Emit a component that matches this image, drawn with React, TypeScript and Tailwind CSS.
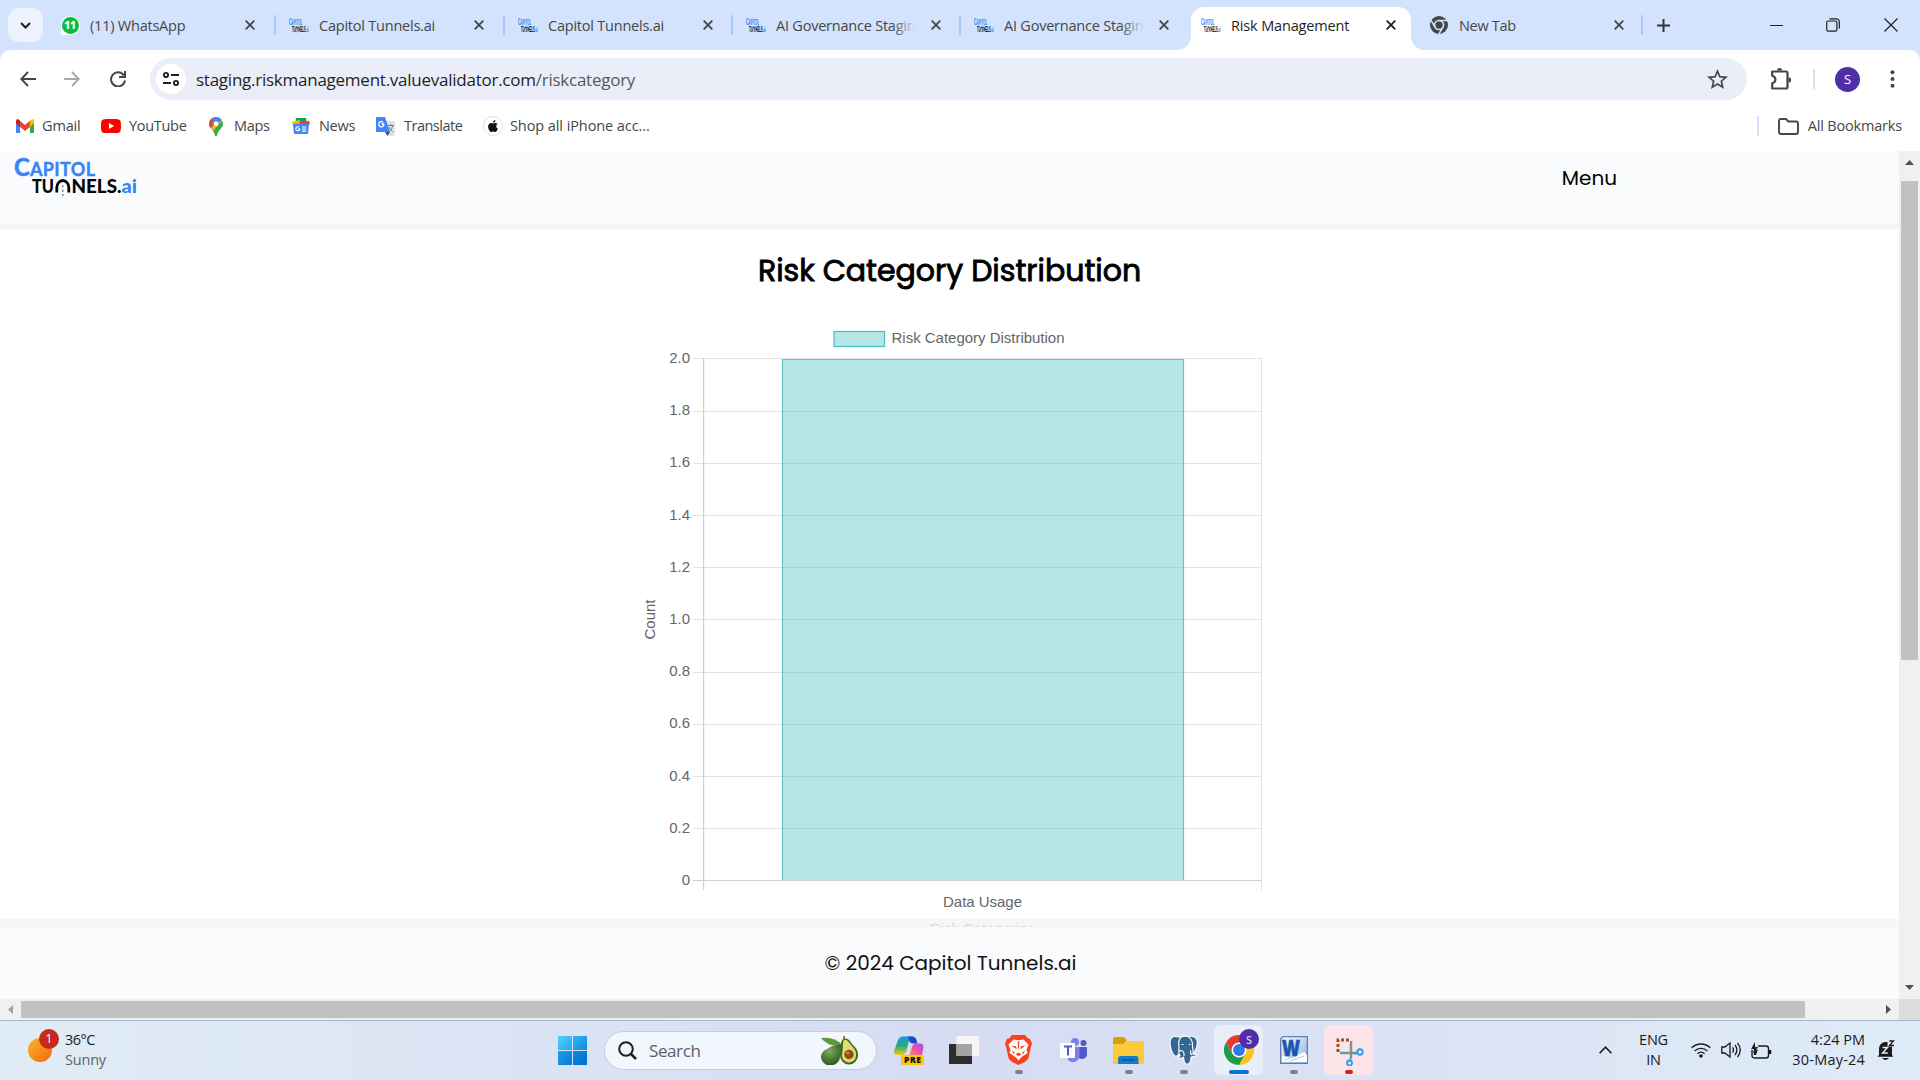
import React from "react";
import { SiYoutube, SiApple } from "react-icons/si";

function CapitolLogo({ className }: { className: string }) {
  return (
    <svg className={className} viewBox="0 0 124 40" preserveAspectRatio="none" fontFamily="Lato" fontWeight="900">
      <text x="0" y="18.500" fontSize="24" fill="#3485f7" fontWeight="700" stroke="#3485f7" strokeWidth="0.5">C</text>
      <text x="16" y="18.500" fontSize="18" fill="#3485f7" fontWeight="700" textLength="65" stroke="#3485f7" strokeWidth="0.4">APITOL</text>
      <text x="18" y="35.500" fontSize="18" fill="#050505" textLength="22" lengthAdjust="spacingAndGlyphs">TU</text>
      <path d="M42.800 35.500v-5a6 7 0 0 1 12 0v5" fill="none" stroke="#050505" strokeWidth="2.800" />
      <path d="M48.800 28v11" stroke="#555" strokeWidth="1" strokeDasharray="2.500 2" />
      <text x="57.500" y="35.500" fontSize="18" fill="#050505" textLength="50" lengthAdjust="spacingAndGlyphs">NELS.</text>
      <text x="107.500" y="35.500" fontSize="19" fill="#3485f7" textLength="15.500" lengthAdjust="spacingAndGlyphs">ai</text>
    </svg>
  );
}

function Close({ dark }: { dark?: boolean }) {
  return (
    <svg className="h-[10px] w-[10px] shrink-0" viewBox="0 0 10 10" stroke={dark ? "#1f1f1f" : "#454746"} strokeWidth="1.8">
      <path d="M.7.7l8.6 8.6M9.3.7L.7 9.3" />
    </svg>
  );
}

function Separator() {
  return <div className="h-5 w-[2px] shrink-0 rounded bg-[#a8c7fa]" />;
}

function WhatsAppIcon() {
  return (
    <div className="grid h-[19px] w-[19px] place-items-center rounded-full rounded-bl-[4px] bg-white">
      <div className="grid h-[17px] w-[17px] place-items-center rounded-full bg-[#09bc3c] font-['Open_Sans'] text-[10px] font-extrabold leading-none text-white">11</div>
    </div>
  );
}

function Tab({ title, icon, width, sep = true, clip = false }: { title: string; icon: React.ReactNode; width: string; sep?: boolean; clip?: boolean }) {
  return (
    <div className={`flex h-[50px] shrink-0 items-center ${width}`}>
      <div className="ml-[13px] flex w-5 shrink-0 justify-center">{icon}</div>
      <div className="relative ml-[10px] mt-[2px] w-[140px] overflow-hidden whitespace-nowrap text-[14.5px] tracking-[-0.22px] text-[#454746]">
        {title}
        {clip && <div className="absolute inset-y-0 right-0 w-6 bg-linear-to-r from-transparent to-[#d3e3fd]" />}
      </div>
      <div className="ml-[15px]"><Close /></div>
      {sep && <div className="ml-auto"><Separator /></div>}
    </div>
  );
}

const favicon = <CapitolLogo className="h-[17px] w-5" />;

function TabStrip() {
  return (
    <div className="flex h-[50px] items-center bg-[#d3e3fd]">
      <div className="ml-2 grid h-[34px] w-[35px] shrink-0 place-items-center rounded-[11px] bg-[#ecf2fe]">
        <svg className="h-[7px] w-[11px]" viewBox="0 0 11 7" fill="none" stroke="#1f1f1f" strokeWidth="2"><path d="M1 1l4.5 4.5L10 1" /></svg>
      </div>
      <div className="w-[4px] shrink-0" />
      <Tab title="(11) WhatsApp" icon={<WhatsAppIcon />} width="w-[229px]" />
      <Tab title="Capitol Tunnels.ai" icon={favicon} width="w-[229px]" />
      <Tab title="Capitol Tunnels.ai" icon={favicon} width="w-[228px]" />
      <Tab title="AI Governance Staging" icon={favicon} width="w-[228px]" clip />
      <Tab title="AI Governance Staging" icon={favicon} width="w-[215px]" sep={false} clip />
      <div className="flex h-[50px] w-[15px] shrink-0 bg-white"><div className="h-full w-full rounded-br-[14px] bg-[#d3e3fd]" /></div>
      <div className="mt-[7px] flex h-[43px] w-[220px] shrink-0 items-center rounded-t-[13px] bg-white pb-[7px]">
        <div className="ml-[10px]">{favicon}</div>
        <div className="ml-[10px] mt-[2px] w-[140px] whitespace-nowrap text-[14.5px] tracking-[-0.15px] text-[#1f1f1f]">Risk Management</div>
        <div className="ml-[15px] w-[10px]"><Close dark /></div>
      </div>
      <div className="flex h-[50px] w-[15px] shrink-0 bg-white"><div className="h-full w-full rounded-bl-[14px] bg-[#d3e3fd]" /></div>
      <svg className="ml-1 h-[18px] w-[18px] shrink-0" viewBox="0 0 18 18"><circle cx="9" cy="9" r="9" fill="#454746" /><circle cx="9" cy="9" r="4.500" fill="none" stroke="#d3e3fd" strokeWidth="1.700" /><path d="M9 4.500h8.200M5.200 11.300L1.100 4.600M12.800 11.300L8.900 18" stroke="#d3e3fd" strokeWidth="1.500" /></svg>
      <div className="ml-[11px] mt-[2px] w-[140px] text-[14.5px] tracking-[-0.3px] text-[#454746]">New Tab</div>
      <div className="ml-[15px]"><Close /></div>
      <div className="ml-[17px]"><Separator /></div>
      <svg className="ml-[14px] h-[13px] w-[13px] shrink-0" viewBox="0 0 13 13" stroke="#333" strokeWidth="2"><path d="M6.5 0v13M0 6.5h13" /></svg>
      <div className="ml-auto flex items-center pr-[22px]">
        <div className="h-px w-[13px] bg-[#1f1f1f]" />
        <svg className="ml-[43px] h-[14px] w-[14px]" viewBox="0 0 14 14" fill="none" stroke="#1f1f1f" strokeWidth="1.2"><rect x=".7" y="3" width="10.2" height="10.2" rx="1.6" /><path d="M3.5.8h6.8a3 3 0 0 1 3 3v6.8" /></svg>
        <svg className="ml-[44px] h-[14px] w-[14px]" viewBox="0 0 14 14" stroke="#1f1f1f" strokeWidth="1.2"><path d="M.5.5l13 13M13.500.5l-13 13" /></svg>
      </div>
    </div>
  );
}

function Toolbar() {
  return (
    <div className="bg-[#d3e3fd]">
      <div className="flex h-[54px] items-center rounded-t-[10px] bg-white pt-[4px]">
        <svg className="ml-5 h-4 w-4" viewBox="0 0 16 16" fill="none" stroke="#454746" strokeWidth="2"><path d="M16 8H1.5M8 1L1.3 8 8 15" /></svg>
        <svg className="ml-[28px] h-4 w-4" viewBox="0 0 16 16" fill="none" stroke="#a9a9a9" strokeWidth="2"><path d="M0 8h14.500M8 1l6.700 7L8 15" /></svg>
        <svg className="ml-[30px] h-4 w-4" viewBox="0 0 16 16" fill="none" stroke="#454746" strokeWidth="2"><path d="M13.800 4.300A7 7 0 1 0 15 9.500M15 0v6H9" /></svg>
        <div className="ml-[24px] flex h-[42px] w-[1597px] items-center rounded-full bg-[#ebeef8]">
          <div className="ml-[6px] grid h-[30px] w-[30px] shrink-0 place-items-center rounded-full bg-white">
            <svg className="h-4 w-4" viewBox="0 0 16 16" fill="none" stroke="#1f1f1f" strokeWidth="1.900"><circle cx="3" cy="4" r="2.100" /><path d="M8 4h8M0 12h8" /><circle cx="13" cy="12" r="2.100" /></svg>
          </div>
          <div className="ml-[10px] mt-[2px] whitespace-nowrap text-[17px] tracking-[-0.25px] text-[#1f1f1f]">staging.riskmanagement.valuevalidator.com<span className="text-[#55585c]">/riskcategory</span></div>
          <svg className="ml-auto mr-[19px] h-[21px] w-[21px]" viewBox="2 2 20 20" fill="#454746"><path d="M22 9.240l-7.190-.62L12 2 9.190 8.630 2 9.240l5.460 4.730L5.820 21 12 17.270 18.180 21l-1.630-7.030zM12 15.400l-3.760 2.270 1-4.280-3.320-2.880 4.380-.38L12 6.100l1.710 4.040 4.380.38-3.320 2.880 1 4.280z" /></svg>
        </div>
        <svg className="ml-[23px] h-[24px] w-[22px]" viewBox="0 0 22 24" fill="none" stroke="#454746" strokeWidth="2.200"><path d="M2.200 4.500H16q1.500 0 1.500 1.500v14q0 1.500-1.500 1.500H2.200v-5.200q3.200-1 3.200-3.800T2.200 8.700z" strokeLinejoin="round" /><path d="M7 3.500a2.600 2.600 0 0 1 5.200 0zM18.500 10.300a2.600 2.600 0 0 1 0 5.200z" fill="#454746" stroke="none" /></svg>
        <div className="ml-[21px] h-5 w-[2px] bg-[#d3e3fd]" />
        <div className="ml-5 grid h-[25px] w-[25px] place-items-center rounded-full bg-[#512da8] text-[13px] leading-none text-white">S</div>
        <svg className="ml-[30px] h-[18px] w-[5px]" viewBox="0 0 5 18" fill="#454746"><circle cx="2.500" cy="2.200" r="2" /><circle cx="2.500" cy="9" r="2" /><circle cx="2.500" cy="15.800" r="2" /></svg>
      </div>
    </div>
  );
}

function Bookmarks() {
  return (
    <div className="flex h-[47px] items-center whitespace-nowrap bg-white pb-[3px] text-[14.5px] tracking-[-0.3px] text-[#454746]">
      <div className="flex w-[85px] items-center pl-4">
        <svg className="mr-2 h-[14px] w-[18px]" viewBox="0 0 19 14" preserveAspectRatio="none"><path d="M0 2v12h4.300V5z" fill="#4285f4" /><path d="M19 2v12h-4.300V5z" fill="#34a853" /><path d="M0 2Q0 0 2 0l2.300 1.800V8L0 4.500z" fill="#c5221f" /><path d="M4.300 1.800L9.500 6l5.200-4.200V8l-5.200 4-5.200-4z" fill="#ea4335" /><path d="M14.700 1.800L17 0q2 0 2 2v2.500L14.700 8z" fill="#fbbc04" /></svg><span className="tracking-[-0.15px]">Gmail</span>
      </div>
      <div className="flex w-[122px] items-center pl-4">
        <SiYoutube className="mr-2 h-5 w-5 text-[#f00]" />YouTube
      </div>
      <div className="flex w-[85px] items-center">
        <svg className="ml-[2px] mr-[11px] h-[19px] w-[14px]" viewBox="0 0 14 20" preserveAspectRatio="none"><clipPath id="pin"><path d="M7 0a7 7 0 0 1 7 7c0 5-5.200 6.500-6.100 12.500a.9.9 0 0 1-1.800 0C5.200 13.500 0 12 0 7a7 7 0 0 1 7-7z" /></clipPath><g clipPath="url(#pin)"><path d="M0 0h14v20H0z" fill="#34a853" /><path d="M14 3L2 17l-2-3L12 1z" fill="#fbbc04" /><path d="M0 0h4l3 4-6 7H0z" fill="#ea4335" /><path d="M2 2L6 0h4l3 3-5 5-4-4z" fill="#4285f4" /></g><circle cx="7" cy="7" r="2.500" fill="#fff" /></svg>Maps
      </div>
      <div className="flex w-[84px] items-center">
        <svg className="mr-[9px] h-[16px] w-[18px]" viewBox="0 0 19 17" preserveAspectRatio="none"><path d="M4 0h11v6H4z" fill="#0c9d58" /><path d="M0 4l8-2 2 5H1z" fill="#fbbc04" /><path d="M8 4l10-1 1 4H8z" fill="#ea4335" /><path d="M1 6h17l-1 10q0 1-1 1H3q-1 0-1-1z" fill="#4285f4" /><path d="M8.500 11.500H6.500M8.500 11.700a2.200 2.200 0 1 1-.8-2M10.500 9.500h4.500M10.500 11.700h4.500M10.500 13.900h4.500" stroke="#fff" strokeWidth="1.200" fill="none" /></svg>News
      </div>
      <div className="flex w-[107px] items-center">
        <svg className="mr-[9px] h-[19px] w-[19px]" viewBox="0 0 19 19"><path d="M8 4h10q1 0 1 1v13q0 1-1 1h-6z" fill="#dfe3e8" /><path d="M1 0h8l5 15H1q-1 0-1-1V1q0-1 1-1z" fill="#4285f4" /><path d="M9 15h5l-2.500 4z" fill="#3949ab" /><path d="M8 7H5.500M8 7.300A2.600 2.600 0 1 1 7 5.200" stroke="#fff" strokeWidth="1.300" fill="none" /><path d="M12 8.500h6M15 7v1.500M17 8.500q-1 4-4 6M13 10q1 3 4 5" stroke="#78818d" strokeWidth="1" fill="none" /></svg><span className="tracking-[-0.5px]">Translate</span>
      </div>
      <div className="flex items-center tracking-[-0.08px]">
        <div className="mr-[7px] grid h-[20px] w-[20px] place-items-center rounded-full border border-[#e2e2e2]"><SiApple className="h-[12px] w-[12px] text-[#111]" /></div>Shop all iPhone acc...
      </div>
      <div className="ml-auto flex items-center pr-[18px] tracking-[-0.18px]">
        <div className="h-5 w-[2px] bg-[#d3e3fd]" />
        <svg className="ml-[19px] mr-[9px] h-[17px] w-[21px]" viewBox="0 0 21 17" fill="none" stroke="#454746" strokeWidth="1.900"><path d="M1 3q0-2 2-2h5l2.300 2.500H18q2 0 2 2V14q0 2-2 2H3q-2 0-2-2z" /></svg>
        All Bookmarks
      </div>
    </div>
  );
}

const ticks = ["2.0", "1.8", "1.6", "1.4", "1.2", "1.0", "0.8", "0.6", "0.4", "0.2", "0"];

function Chart() {
  return (
    <svg className="h-[610px] w-[660px]" viewBox="620 320 660 610" fontFamily="Liberation Sans" fontSize="15" fill="#666">
      <rect x="834" y="331.500" width="50.500" height="15" fill="#b7e6e6" stroke="#4bc0c0" strokeWidth="1.250" />
      <text x="891.500" y="343" textLength="173">Risk Category Distribution</text>
      {ticks.map((t, i) => (
        <g key={t}>
          <rect x="693" y={Math.ceil(358 + i * 52.2)} width="568.500" height="1" fill={i === 10 ? "#cfcfcf" : "#e3e3e3"} />
          <text x="690" y={363 + i * 52.2} textAnchor="end">{t}</text>
        </g>
      ))}
      <rect x="703" y="358" width="1.200" height="532" fill="#d0d0d0" />
      <rect x="1261" y="358" width="1" height="532" fill="#e2e2e2" />
      <rect x="782" y="359" width="402" height="521" fill="#4bc0c0" fillOpacity=".4" />
      <path d="M782.500 880V359.500h401V880" fill="none" stroke="#4bc0c0" strokeOpacity=".8" strokeWidth="1.200" />
      <text x="982.500" y="907" textAnchor="middle" textLength="79">Data Usage</text>
      <text x="982.500" y="934" textAnchor="middle" textLength="105">Risk Categories</text>
      <text transform="translate(655 619.500) rotate(-90)" textAnchor="middle" textLength="40">Count</text>
    </svg>
  );
}

function WebPage() {
  return (
    <div className="flex h-[848px]">
      <div className="flex min-w-0 flex-1 flex-col overflow-hidden bg-white font-[Poppins,Inter,sans-serif]">
        <header className="flex h-[79px] shrink-0 justify-between border-b-[7px] border-[#f3f7fa] bg-[#f9fbfd]">
          <CapitolLogo className="ml-[14px] mt-[6px] h-[40px] w-[124px]" />
          <div className="mr-[282px] mt-[13px] text-[20px] leading-[28px] text-black">Menu</div>
        </header>
        <main className="flex h-[689px] shrink-0 flex-col items-center">
          <h1 className="mt-[21px] h-[40px] whitespace-nowrap text-[30px] font-normal leading-[40px] text-black [-webkit-text-stroke:0.9px_black]">Risk Category Distribution</h1>
          <div className="mt-[29px] flex h-[610px] w-[660px] shrink-0">
            <Chart />
          </div>
        </main>
        <footer className="relative flex h-[80px] shrink-0 flex-col">
          <div className="h-[8px] bg-[#f1f5f9]/80" />
          <div className="grid h-[72px] place-items-center bg-[#f9fbfd] pl-[2px] text-[20px] text-[#111]">© 2024 Capitol Tunnels.ai</div>
        </footer>
      </div>
      <div className="flex w-[21px] flex-col items-center bg-[#f0f0f0]">
        <svg className="mt-[9px] h-[5px] w-[9px]" viewBox="0 0 9 5"><path d="M0 5h9L4.500 0z" fill="#505050" /></svg>
        <div className="mt-4 h-[479px] w-[17px] bg-[#c1c1c1]" />
        <svg className="mb-[9px] mt-auto h-[5px] w-[9px]" viewBox="0 0 9 5"><path d="M0 0h9L4.500 5z" fill="#505050" /></svg>
      </div>
    </div>
  );
}

function HScroll() {
  return (
    <div className="flex h-[21px] items-center bg-[#f0f0f0]">
      <svg className="ml-2 h-[9px] w-[5px]" viewBox="0 0 5 9"><path d="M5 0v9L0 4.500z" fill="#a3a3a3" /></svg>
      <div className="ml-2 h-[17px] w-[1784px] bg-[#c1c1c1]" />
      <svg className="ml-auto mr-2 h-[9px] w-[5px]" viewBox="0 0 5 9"><path d="M0 0v9l5-4.500z" fill="#505050" /></svg>
      <div className="h-full w-[21px] bg-[#dcdcdc]" />
    </div>
  );
}

function Avocado() {
  return (
    <svg className="h-[29px] w-[38px]" viewBox="0 0 38 29">
      <defs><radialGradient id="av" cx=".4" cy=".3" r=".7"><stop offset="0" stopColor="#83a95d" /><stop offset="1" stopColor="#2f5922" /></radialGradient></defs>
      <path d="M0 2Q12 0 22 9Q8 12 0 2" fill="#5b9a38" />
      <path d="M20 9Q22 14 19 21a9.500 8.500 0 1 1-13-8Q14 8 20 9" fill="url(#av)" />
      <path d="M23 0v5" stroke="#8b5a25" strokeWidth="1.600" />
      <path d="M22 3Q27 1 31 8Q38 14 37 20A9 9 0 0 1 19 19Q20 13 20 9Q20 5 22 3" fill="#3e6b22" />
      <path d="M23 4Q26 3 30 9Q36 15 35 20A7 7 0 0 1 21 19Q22 13 22 8Q22 5 23 4" fill="#e0dc6a" />
      <circle cx="28" cy="18.500" r="4.700" fill="#8a4b1d" /><circle cx="26.800" cy="17" r="1.800" fill="#c47e49" />
    </svg>
  );
}

function Copilot() {
  return (
    <svg className="h-[29px] w-[30px]" viewBox="0 0 30 29">
      <defs>
        <linearGradient id="ca" x1="0" y1="0" x2="0" y2="1"><stop offset="0" stopColor="#1799e0" /><stop offset=".5" stopColor="#29a67c" /><stop offset="1" stopColor="#f2cd13" /></linearGradient>
        <linearGradient id="cb" x1="1" y1="0" x2="0" y2="1"><stop offset="0" stopColor="#9b55e8" /><stop offset=".5" stopColor="#e84fb0" /><stop offset="1" stopColor="#ff8a4c" /></linearGradient>
      </defs>
      <path d="M4 4q1.500-3.500 5-3.500h10q-3 .5-4 4L12.500 15q-1 4-4.500 4H3q-4 0-3-4z" fill="url(#ca)" />
      <path d="M14 .5h4q3.500 0 4.500 3.500l1 3.500h-5q-2 0-3-2z" fill="#1b49c8" />
      <path d="M18 11q1-3.500 4-3.500h4q4 0 3.500 4L28 19H15.500z" fill="url(#cb)" />
      <rect x="7" y="19" width="23" height="10" rx="2" fill="#fdc60b" />
      <text x="18.500" y="27" textAnchor="middle" fontFamily="Open Sans" fontWeight="800" fontSize="8.500" fill="#111" textLength="17">PRE</text>
    </svg>
  );
}

function TaskView() {
  return (
    <svg className="h-[29px] w-[30px]" viewBox="0 0 30 29"><path d="M1 8h22v20H1q-1 0-1-1V9q0-1 1-1z" fill="#2d2d2d" /><rect x="7.500" y="0" width="22.500" height="20" rx="1" fill="#f5f5f5" /><path d="M7.500 8H23v12H7.500z" fill="#a4a4a4" /></svg>
  );
}

function Brave() {
  return (
    <svg className="h-[30px] w-[27px]" viewBox="0 0 27 30">
      <path d="M7 0h13l3 3.500 2 .2 2 5-1 2.800-2.500 11.500q-1 2.300-4 4.300L13.500 30l-6-2.700q-3-2-4-4.300L1 11.500 0 8.700l2-5 2-.2z" fill="#f8421d" />
      <path d="M8.500 4.500l5 .8 5-.8 5 5-2 5.500 1 3-6.500 4.500-2.500 3-2.500-3L4.500 18l1-3-2-5.500z" fill="#fff" />
      <path d="M6.500 10.500l4.500.8.800 3.200zM20.500 10.500l-4.500.8-.800 3.200zM10.500 19.300l3-1.700 3 1.700-3 2zM12.700 6.500h1.600l-.3 7h-1zM7 15l3 3-1.500 1zM20 15l-3 3 1.500 1z" fill="#f8421d" />
    </svg>
  );
}

function Teams() {
  return (
    <svg className="h-[25px] w-[28px]" viewBox="0 0 28 25"><circle cx="15" cy="4" r="4" fill="#7b83eb" /><circle cx="23.500" cy="5" r="3" fill="#5059c9" /><path d="M18 9h8q1 0 1 1v6a5 5 0 0 1-9 3z" fill="#5059c9" /><path d="M8 9h11.500v9a6.700 6.700 0 0 1-11.500 4z" fill="#7b83eb" /><rect y="5" width="15" height="15" rx="1" fill="#fff" /><path d="M4 8.500h8M8 8.500v9" stroke="#5059c9" strokeWidth="2" /></svg>
  );
}

function Folder() {
  return (
    <svg className="h-[27px] w-[31px]" viewBox="0 0 31 27"><path d="M0 1.500Q0 0 1.500 0h8q2 0 3 1.500L14 4v8H0z" fill="#dc9b0b" /><path d="M0 7h10l3-3h16q2 0 2 2v20q0 1-1 1H1q-1 0-1-1z" fill="#fcc83c" /><path d="M5 27v-5q0-3 3-3h15q2.500 0 2.500 3v5z" fill="#127cce" /><path d="M9 23h13" stroke="#0a4e91" strokeWidth="1.300" /></svg>
  );
}

function Elephant() {
  return (
    <svg className="h-[30px] w-[29px]" viewBox="0 0 29 30" strokeLinejoin="round">
      <path d="M8 1.500C3 .5.800 3.500 1 8c.2 4 2 10 4.300 12.500 1.500 1.500 3 .5 4-1l1.700 1c-1 1.500-3 2-1 2.700 1.500.5 3.500 0 4.500-1 .2 3 .5 7 3.500 7 3.500 0 4-3 4-7l5-1.200c1.500-1 1-2-1.500-1.800l-1.500-.2C27 15 29 9 28 5 26.500 1 22 .500 19 1.500c-3-.9-5-.8-7 .8-1-.5-2.500-.8-4-.8z" fill="#336791" stroke="#f4f7fc" strokeWidth="1.300" />
      <path d="M12 2.300C9 5 9.500 9 10 12c.3 3-1.700 5 1 8.500M19 1.500c3 2 5 5 4.500 9.500 0 3 1 5 .5 7.500M15 21c0-3 .5-4-1.500-5-1.500-.8-3 0-4 0M23 20c-1.500-1-2-2.500-1-4.500" fill="none" stroke="#f4f7fc" strokeWidth="1.200" />
      <path d="M12.500 9.500h2M20 9.500h1.500" stroke="#fff" strokeWidth="1.100" />
    </svg>
  );
}

function ChromeIcon() {
  return (
    <svg className="h-[30px] w-[30px]" viewBox="0 0 30 30"><path d="M2 7.500A15 15 0 0 1 28 7.500H15L8.500 18.800z" fill="#e33b2e" /><path d="M28 7.500A15 15 0 0 1 15 30L21.500 18.800 15 7.500z" fill="#fcc31e" /><path d="M15 30A15 15 0 0 1 2 7.500L8.500 18.800h13z" fill="#229a4c" /><circle cx="15" cy="15" r="7.500" fill="#fff" /><circle cx="15" cy="15" r="5.900" fill="#3077e8" /></svg>
  );
}

function Word() {
  return (
    <svg className="h-[28px] w-[28px]" viewBox="0 0 28 28"><defs><linearGradient id="wd" x1="0" y1="0" x2="1" y2="1"><stop offset="0" stopColor="#f4f9fe" /><stop offset="1" stopColor="#8fb4dd" /></linearGradient></defs><path d="M3 .7h24.300v26.600H.7V3z" fill="url(#wd)" stroke="#5b7fae" strokeWidth="1.300" /><path d="M2 20l9 2 13-6 3 3v7H2z" fill="#fff" /><path d="M4 24l12-4M10 25l14-5" stroke="#b8c8dc" strokeWidth="1" /><text x="2" y="20" fontFamily="Open Sans" fontWeight="800" fontSize="22" fill="#1b56ae" stroke="#1b56ae" strokeWidth=".7" textLength="18" lengthAdjust="spacingAndGlyphs">W</text></svg>
  );
}

function Snip() {
  return (
    <svg className="h-[31px] w-[30px]" viewBox="0 0 30 31"><rect width="19" height="22" rx="2" fill="#eceaea" /><path d="M4 17V5h13" fill="none" stroke="#d03a17" strokeWidth="3" strokeDasharray="3 2" /><path d="M6 18h18M17 6v17" stroke="#8a8d91" strokeWidth="2.400" /><circle cx="26" cy="17" r="2.700" fill="none" stroke="#28a0e4" strokeWidth="1.900" /><circle cx="15.500" cy="28" r="2.500" fill="none" stroke="#28a0e4" strokeWidth="1.900" /><path d="M20 19l4-1.500M17 22l-1 4" stroke="#28a0e4" strokeWidth="1.800" /></svg>
  );
}

function Slot({ children, tile = "", mark = "" }: { children: React.ReactNode; tile?: string; mark?: string }) {
  return (
    <div className="flex w-[55px] justify-center">
      <div className={`relative flex h-[50px] w-[49px] items-center justify-center rounded-md ${tile}`}>
        {children}
        {mark && <div className={`absolute bottom-[1px] h-[4px] rounded-full ${mark}`} />}
      </div>
    </div>
  );
}

function Taskbar() {
  return (
    <div className="flex h-[60px] items-center border-t border-[#aab4c2] bg-linear-to-r from-[#e0ecf6] via-[#d6dcf2] to-[#dfebf7] pb-px text-[#1b1b1b]">
      <div className="flex w-[558px] items-center">
        <div className="relative -mt-px ml-7 h-6 w-6 rounded-full bg-linear-to-br from-[#f5b52c] to-[#f2650c]">
          <div className="absolute -top-[9px] left-[11px] grid h-5 w-5 place-items-center rounded-full bg-[#c42b1c] text-[12px] leading-none text-white">1</div>
        </div>
        <div className="ml-[13px] text-[14.500px] leading-5 tracking-[-0.200px]"><div className="tracking-[-0.5px]">36°C</div><div className="text-[#5f6368]">Sunny</div></div>
      </div>
      <div className="grid h-[29px] w-[29px] grid-cols-2 gap-[1px]">
        <div className="bg-linear-to-br from-[#4dcffb] to-[#24a8ec]" /><div className="bg-linear-to-br from-[#33b7f2] to-[#0c8ade]" />
        <div className="bg-linear-to-br from-[#1ea2e8] to-[#0678d4]" /><div className="bg-linear-to-br from-[#0b8ae0] to-[#0070cf]" />
      </div>
      <div className="ml-[17px] flex h-[39px] w-[273px] items-center rounded-full border border-[#c5cce0] bg-[#f2f6fd] pl-[13px] pr-[17px]">
        <svg className="h-[19px] w-[19px]" viewBox="0 0 19 19" fill="none" stroke="#1f1f1f" strokeWidth="2"><circle cx="8" cy="8" r="6.800" /><path d="M13 13l5 5" strokeWidth="2.500" /></svg>
        <div className="ml-3 mt-px text-[17px] tracking-[-0.400px] text-[#5c5f66]">Search</div>
        <div className="ml-auto"><Avocado /></div>
      </div>
      <div className="ml-[4px] flex">
        <Slot><Copilot /></Slot>
        <Slot><TaskView /></Slot>
        <Slot mark="w-2 bg-[#7d818b]"><Brave /></Slot>
        <Slot><Teams /></Slot>
        <Slot mark="w-2 bg-[#7d818b]"><Folder /></Slot>
        <Slot mark="w-2 bg-[#7d818b]"><Elephant /></Slot>
        <Slot tile="bg-[#e9eef9]" mark="w-5 bg-[#0078d4]">
          <ChromeIcon />
          <div className="absolute left-[25px] top-[4px] grid h-5 w-5 place-items-center rounded-full bg-[#512da8] text-[11px] font-semibold leading-none text-[#d7cdf0]">S</div>
        </Slot>
        <Slot mark="w-2 bg-[#7d818b]"><Word /></Slot>
        <Slot tile="bg-[#fce4e8]" mark="w-2 bg-[#c42b1c]"><Snip /></Slot>
      </div>
      <div className="ml-auto flex items-center pr-[25px]">
        <svg className="h-2 w-[13px]" viewBox="0 0 13 8" fill="none" stroke="#1b1b1b" strokeWidth="1.600"><path d="M.6 7.200l5.900-6 5.900 6" /></svg>
        <div className="ml-[27px] w-[29px] text-center text-[14.500px] leading-5 tracking-[-0.200px]"><div>ENG</div><div>IN</div></div>
        <svg className="ml-[23px] h-4 w-5" viewBox="0 0 20 16" fill="none" stroke="#1b1b1b" strokeWidth="1.400"><path d="M.7 5.800a13.200 13.200 0 0 1 18.600 0M3.700 8.900a9 9 0 0 1 12.600 0M6.500 11.700a5 5 0 0 1 7 0" /><circle cx="10" cy="14" r="1.800" fill="#1b1b1b" stroke="none" /></svg>
        <svg className="ml-[10px] h-[18px] w-[21px]" viewBox="0 0 21 18" fill="none" stroke="#1b1b1b" strokeWidth="1.300"><path d="M.8 6h3L9 2v14l-5.200-4h-3zM11.500 6.300q2 2.700 0 5.400M14 4q3.800 5 0 10M16.500 1.800q5.600 7.200 0 14.400" /></svg>
        <svg className="ml-[9px] h-[17px] w-[21px]" viewBox="0 0 21 17" fill="none" stroke="#1b1b1b" strokeWidth="1.400"><path d="M7 4h8q2.500 0 2.500 2.500v7Q17.500 16 15 16H3.500Q1 16 1 13.500V8" /><path d="M19 8v4" strokeWidth="2.500" /><path d="M4 0L0 7h3l-1 5 5-7H4z" fill="#1b1b1b" stroke="none" /><path d="M3 13V9l4-2-2 6z" fill="#1b1b1b" stroke="none" /></svg>
        <div className="ml-[18px] w-[75px] whitespace-nowrap text-right text-[14.500px] leading-5 tracking-[0.200px]"><div className="tracking-[0px]">4:24 PM</div><div>30-May-24</div></div>
        <svg className="ml-[12px] h-[20px] w-[18px]" viewBox="0 0 18 20"><path d="M2 15V8.500A6.500 6.500 0 0 1 8.500 2h2v4.500H15V15l1.300 1.800H.3zM5 18h7q-3.500 4-7 0" fill="#1b1b1b" /><path d="M5.500 7.500h5L5.500 13h5.300" fill="none" stroke="#e6effa" strokeWidth="1.400" /><path d="M12.300 1h4.200l-4 4.500h4.500" fill="none" stroke="#1b1b1b" strokeWidth="1.300" /></svg>
      </div>
    </div>
  );
}

export default function App() {
  return (
    <div className="h-[1080px] w-[1920px] overflow-hidden bg-white font-['Segoe_UI','Open_Sans',sans-serif]">
      <TabStrip />
      <Toolbar />
      <Bookmarks />
      <WebPage />
      <HScroll />
      <Taskbar />
    </div>
  );
}
